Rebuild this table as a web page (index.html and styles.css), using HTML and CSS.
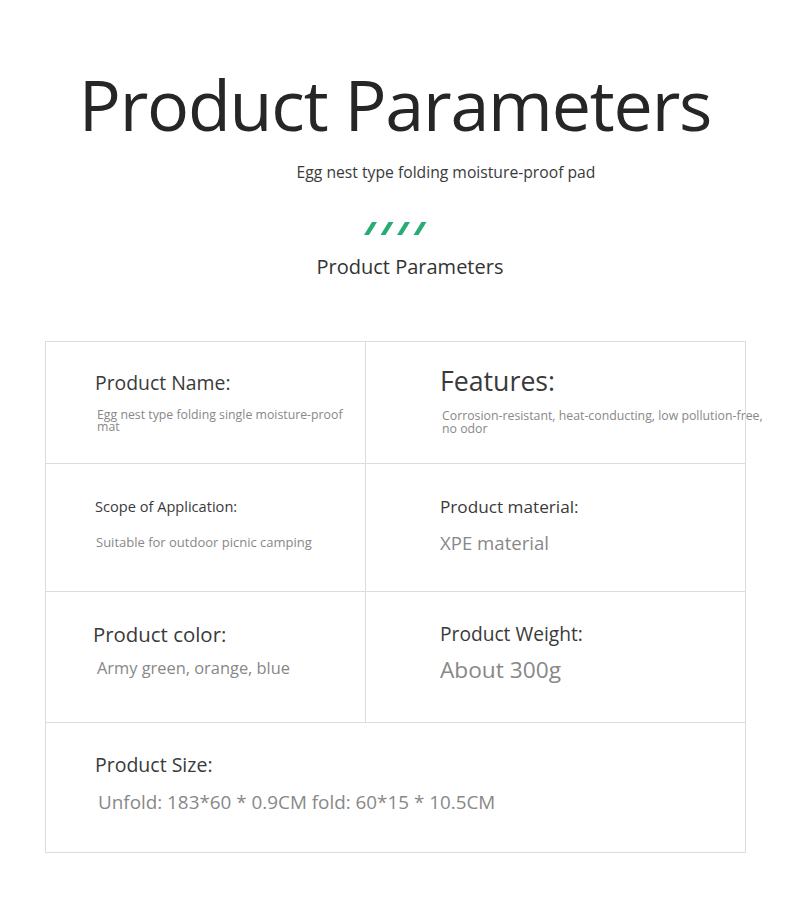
FILE: index.html
```html
<!DOCTYPE html>
<html>
<head>
<meta charset="utf-8">
<link rel="stylesheet" href="styles.css">
</head>
<body>
<div class="page">
  <header class="hero">
    <h1 class="title">Product Parameters</h1>
    <p class="subtitle">Egg nest type folding moisture-proof pad</p>
    <div class="slashes">
      <svg width="63" height="13" viewBox="0 0 63 13">
        <g fill="#27ad74">
          <polygon points="0,13 5,13 13,0 8,0"/>
          <polygon points="16.5,13 21.5,13 29.5,0 24.5,0"/>
          <polygon points="33,13 38,13 46,0 41,0"/>
          <polygon points="49.5,13 54.5,13 62.5,0 57.5,0"/>
        </g>
      </svg>
    </div>
    <h2 class="section">Product Parameters</h2>
  </header>

  <div class="table">
    <div class="cell c1">
      <div class="label l-name">Product Name:</div>
      <div class="value v-name">Egg nest type folding single moisture-proof mat</div>
    </div>
    <div class="cell c2">
      <div class="label l-feat">Features:</div>
      <div class="value v-feat">Corrosion-resistant, heat-conducting, low pollution-free, no odor</div>
    </div>
    <div class="cell c3">
      <div class="label l-scope">Scope of Application:</div>
      <div class="value v-scope">Suitable for outdoor picnic camping</div>
    </div>
    <div class="cell c4">
      <div class="label l-mat">Product material:</div>
      <div class="value v-mat">XPE material</div>
    </div>
    <div class="cell c5">
      <div class="label l-color">Product color:</div>
      <div class="value v-color">Army green, orange, blue</div>
    </div>
    <div class="cell c6">
      <div class="label l-weight">Product Weight:</div>
      <div class="value v-weight">About 300g</div>
    </div>
    <div class="cell c7 wide">
      <div class="label l-size">Product Size:</div>
      <div class="value v-size">Unfold: 183*60 * 0.9CM fold: 60*15 * 10.5CM</div>
    </div>
  </div>
</div>
</body>
</html>
```

FILE: styles.css
```css
* { box-sizing: border-box; margin: 0; padding: 0; }
html, body { background: #fff; }
body {
  font-family: "Open Sans", "Noto Sans", sans-serif;
  color: #333;
  width: 790px;
  height: 907px;
  overflow: hidden;
}
.page { padding-top: 63px; }
.hero { display: flex; flex-direction: column; align-items: center; }
.title {
  font-weight: 400;
  font-size: 70px;
  line-height: 82px;
  letter-spacing: -1.2px;
  color: #262626;
}
.subtitle {
  margin-top: 17px;
  margin-left: 102px;
  font-size: 15.7px;
  line-height: 20px;
  color: #3a3a3a;
}
.slashes { margin-top: 40px; height: 13px; }
.slashes svg { display: block; }
.section {
  margin-top: 19px;
  margin-left: 30px;
  font-weight: 400;
  font-size: 20px;
  line-height: 26px;
  color: #333;
}
.table {
  margin: 61px 0 0 45px;
  width: 701px;
  display: grid;
  grid-template-columns: 320px 380px;
  grid-template-rows: 122px 128px 131px 129px;
  border: 1px solid #dcdcdc;
}
.cell { border-right: 1px solid #dcdcdc; border-bottom: 1px solid #dcdcdc; }
.c2, .c4, .c6, .wide { border-right: none; }
.wide { grid-column: 1 / 3; border-bottom: none; }
.label { color: #3a3a3a; white-space: nowrap; }
.value { color: #888; }

.c1 { padding: 29px 0 0 49px; }
.l-name { font-size: 19.4px; line-height: 24px; }
.v-name { margin-top: 14px; margin-left: 2px; width: 262px; font-size: 12.3px; line-height: 12px; }

.c2 { padding: 23px 0 0 74px; }
.l-feat { font-size: 26.7px; line-height: 32px; }
.v-feat { margin-top: 12px; margin-left: 2px; width: 325px; font-size: 12.3px; line-height: 13px; }

.c3 { padding: 33px 0 0 49px; }
.l-scope { font-size: 14.6px; line-height: 18px; }
.v-scope { margin-top: 19px; margin-left: 1px; font-size: 13px; line-height: 17px; }

.c4 { padding: 32px 0 0 74px; }
.l-mat { font-size: 17.2px; line-height: 22px; }
.v-mat { margin-top: 13px; font-size: 18.6px; line-height: 24px; }

.c5 { padding: 30px 0 0 47px; }
.l-color { font-size: 20.4px; line-height: 24px; }
.v-color { margin-top: 12px; margin-left: 4px; font-size: 16.4px; line-height: 20px; }

.c6 { padding: 30px 0 0 74px; }
.l-weight { font-size: 19.2px; line-height: 24px; }
.v-weight { margin-top: 10px; font-size: 22.7px; line-height: 28px; }

.c7 { padding: 30px 0 0 49px; }
.l-size { font-size: 19.5px; line-height: 24px; }
.v-size { margin-top: 13px; margin-left: 3px; font-size: 18.85px; line-height: 24px; }
```
